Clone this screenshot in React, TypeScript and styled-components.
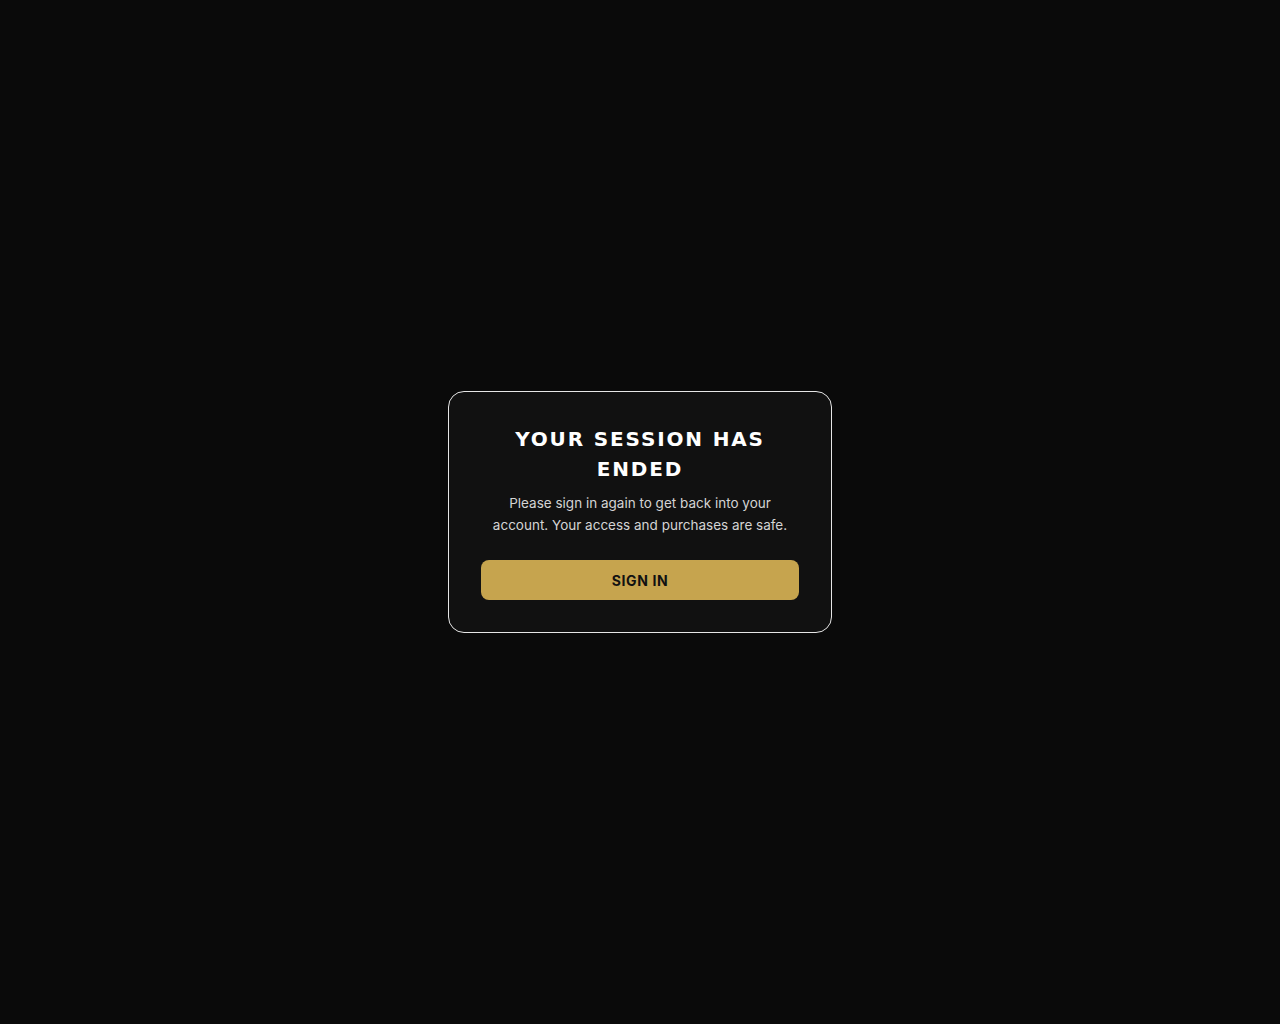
import React from "react";
import styled, { createGlobalStyle } from "styled-components";

const Global = createGlobalStyle`
  html, body, #root { margin: 0; padding: 0; height: 100%; }
  body { background: #0a0a0a; font-family: Inter, "Noto Sans", sans-serif; }
  * { box-sizing: border-box; }
`;

const Page = styled.main`
  min-height: 100vh;
  display: flex;
  align-items: center;
  justify-content: center;
`;

const Card = styled.section`
  width: 384px;
  background: #111111;
  border: 1px solid #e6e6e6;
  border-radius: 16px;
  padding: 32px;
  display: flex;
  flex-direction: column;
  align-items: center;
  text-align: center;
`;

const Title = styled.h1`
  margin: 0;
  font-family: "DejaVu Sans", sans-serif;
  font-weight: 700;
  font-size: 20px;
  line-height: 30px;
  letter-spacing: 1.85px;
  color: #ffffff;
  text-transform: uppercase;
  width: 290px;
`;

const Body = styled.p`
  margin: 8px 0 0;
  font-family: Inter, sans-serif;
  font-size: 13.5px;
  line-height: 22px;
  color: #d4d4d4;
  max-width: 300px;
`;

const Button = styled.button`
  margin-top: 24px;
  width: 100%;
  height: 40px;
  border: none;
  border-radius: 8px;
  background: #c6a44e;
  color: #111111;
  font-family: Inter, sans-serif;
  font-weight: 700;
  font-size: 14px;
  letter-spacing: 0.6px;
  text-transform: uppercase;
  cursor: pointer;
`;

export default function App() {
  return (
    <>
      <Global />
      <Page>
        <Card>
          <Title>Your session has ended</Title>
          <Body>
            Please sign in again to get back into your account. Your access and purchases are safe.
          </Body>
          <Button>Sign in</Button>
        </Card>
      </Page>
    </>
  );
}
